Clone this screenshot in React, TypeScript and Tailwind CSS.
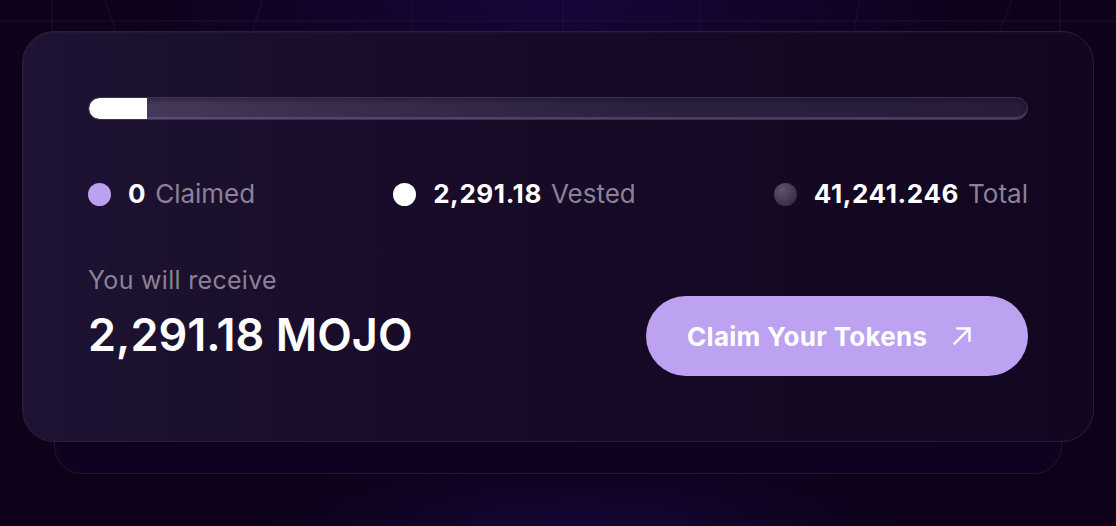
import React from "react";

function ArrowUpRight() {
  return (
    <svg width="20" height="20" viewBox="0 0 20 20" fill="none" stroke="white" strokeWidth="2.4" strokeLinecap="square" strokeLinejoin="miter">
      <path d="M2.5 17.5 L17 3" />
      <path d="M5.5 2.5 H17.5 V14.5" />
    </svg>
  );
}

function Legend({ dot, value, label }: { dot: React.ReactNode; value: string; label: string }) {
  return (
    <div className="flex items-center gap-[17px]">
      {dot}
      <div className="flex items-baseline gap-[9px] text-[26px] leading-none">
        <span className="font-bold tracking-[0.6px] text-white">{value}</span>
        <span className="text-[#8c8197]">{label}</span>
      </div>
    </div>
  );
}

export default function App() {
  return (
    <div
      className="relative w-[1116px] h-[526px] overflow-hidden bg-[#0e0119]"
      style={{ fontFamily: "Inter, 'Noto Sans', sans-serif" }}
    >
      <div className="absolute inset-0 bg-[radial-gradient(ellipse_40%_30%_at_50%_0%,#17053a_0%,transparent_100%)]" />
      <div className="absolute inset-0 bg-[radial-gradient(ellipse_30%_15%_at_52%_100%,#150634_0%,transparent_100%)]" />
      <svg className="absolute left-0 top-0" width="1116" height="40" viewBox="0 0 1116 40">
        <g stroke="#24173a" strokeWidth="1" fill="none" opacity="0.7">
          <path d="M0 21 H1116" />
          <path d="M52 0 V40" />
          <path d="M105 0 Q112 20 118 40" />
          <path d="M262 0 Q256 20 250 40" />
          <path d="M412 0 V40" />
          <path d="M563 0 V40" />
          <path d="M700 0 V40" />
          <path d="M860 0 Q856 20 852 40" />
          <path d="M1012 0 Q1004 20 996 40" />
          <path d="M1060 0 V40" />
        </g>
      </svg>

      <div className="relative px-[22px] pt-[31px]">
        <div className="relative">
          {/* stacked card behind */}
          <div className="absolute left-[32px] right-[32px] bottom-[-32px] h-[120px] rounded-[28px] border border-[#221634] bg-[#0f0220]" />

          <div className="relative h-[411px] rounded-[32px] border border-[#2a1f38] bg-[linear-gradient(90deg,#1e1332_0%,#190d2b_30%,#150925_60%,#130620_100%)] px-[65px] pt-[65px] shadow-[inset_1px_1px_0_rgba(255,255,255,0.03)]">
            {/* progress bar */}
            <div className="relative h-[23px] w-full overflow-hidden rounded-full border border-[#3d3150] bg-[linear-gradient(90deg,#4a3c5e_0%,#3a2d4e_25%,#2c2040_60%,#281c3a_100%)] shadow-[inset_0_-2px_0_rgba(120,100,150,0.45),inset_0_3px_4px_rgba(0,0,0,0.25)]">
              <div className="absolute left-0 top-0 h-full w-[58px] rounded-l-full bg-white" />
            </div>

            {/* legend */}
            <div className="mt-[61px] flex items-center justify-between">
              <Legend
                dot={<div className="h-[23px] w-[23px] rounded-full bg-[#bca1f1]" />}
                value="0"
                label="Claimed"
              />
              <Legend
                dot={<div className="h-[23px] w-[23px] rounded-full bg-white" />}
                value="2,291.18"
                label="Vested"
              />
              <Legend
                dot={<div className="h-[23px] w-[23px] rounded-full bg-[radial-gradient(circle_at_35%_30%,#5f546c_0%,#3c3148_70%,#2f253b_100%)]" />}
                value="41,241.246"
                label="Total"
              />
            </div>

            {/* receive */}
            <div className="mt-[57px] flex items-start justify-between">
              <div className="flex flex-col">
                <div className="text-[25px] leading-[32px] tracking-[0.3px] text-[#8c8197]">You will receive</div>
                <div className="mt-[15px] text-[45px] font-semibold leading-[48px] tracking-[0px] text-white">
                  2,291.18 MOJO
                </div>
              </div>
              <button className="mt-[32px] flex h-[80px] w-[382px] items-center gap-[25px] rounded-full bg-[#bda2f2] pl-[41px] text-[26px] font-bold tracking-[0.3px] text-white">
                <span>Claim Your Tokens</span>
                <ArrowUpRight />
              </button>
            </div>
          </div>
        </div>
      </div>
    </div>
  );
}
